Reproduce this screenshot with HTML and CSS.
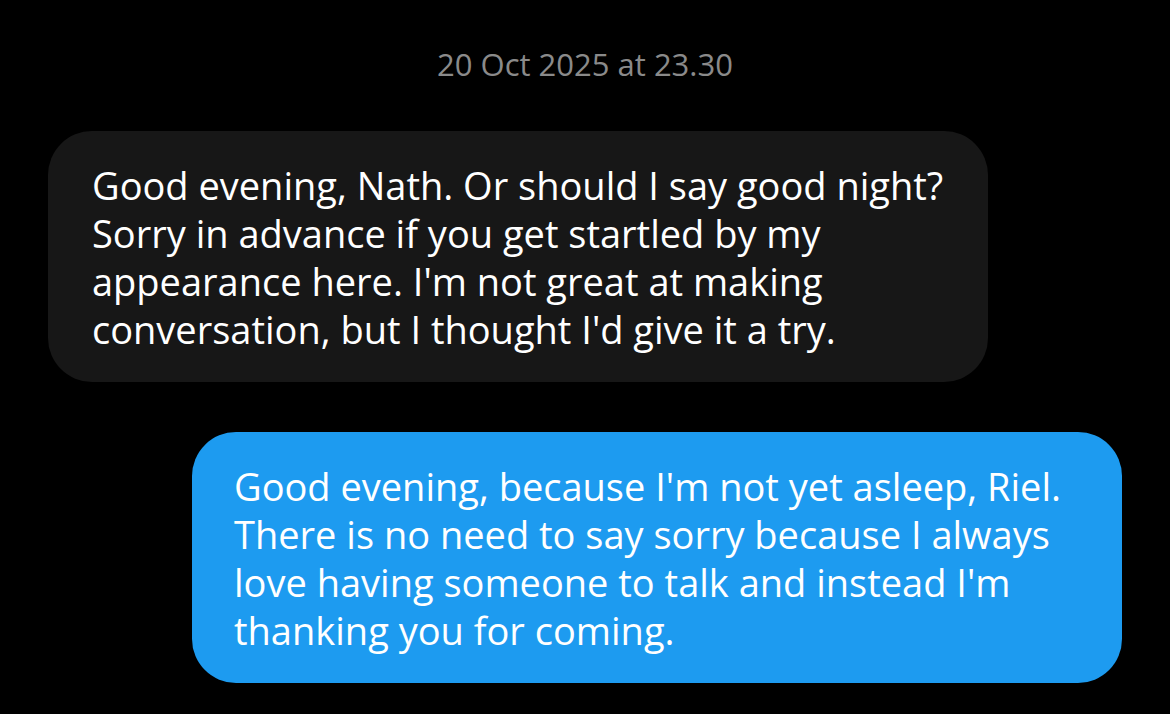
FILE: index.html
```html
<!DOCTYPE html>
<html>
<head>
<meta charset="utf-8">
<link rel="stylesheet" href="styles.css">
</head>
<body>
<main class="chat">
  <div class="stamp">20 Oct 2025 at 23.30</div>
  <div class="row row-in">
    <div class="bubble bubble-in">Good evening, Nath. Or should I say good night?<br>Sorry in advance if you get startled by my<br>appearance here. I'm not great at making<br>conversation, but I thought I'd give it a try.</div>
  </div>
  <div class="row row-out">
    <div class="bubble bubble-out">Good evening, because I'm not yet asleep, Riel.<br>There is no need to say sorry because I always<br>love having someone to talk and instead I'm<br>thanking you for coming.</div>
  </div>
</main>
</body>
</html>
```
FILE: styles.css
```css
html, body {
  margin: 0;
  padding: 0;
  background: #000;
  width: 1170px;
  height: 714px;
  overflow: hidden;
}
.chat {
  display: flex;
  flex-direction: column;
  padding: 46px 48px 0 48px;
  font-family: "Open Sans", "Noto Sans", sans-serif;
}
.stamp {
  text-align: center;
  color: #8a8a8a;
  font-size: 31px;
  line-height: 36px;
  margin-bottom: 49px;
}
.row {
  display: flex;
}
.row-out {
  justify-content: flex-end;
  margin-top: 50px;
  margin-right: 0;
}
.bubble {
  color: #fff;
  font-size: 38px;
  line-height: 48px;
  border-radius: 44px;
  box-sizing: border-box;
  height: 251px;
  padding: 30px 30px 0 44px;
  white-space: nowrap;
}
.bubble-in {
  background: #171717;
  width: 940px;
}
.bubble-out {
  background: #1d9bf0;
  width: 930px;
  padding-left: 42px;
}
```
